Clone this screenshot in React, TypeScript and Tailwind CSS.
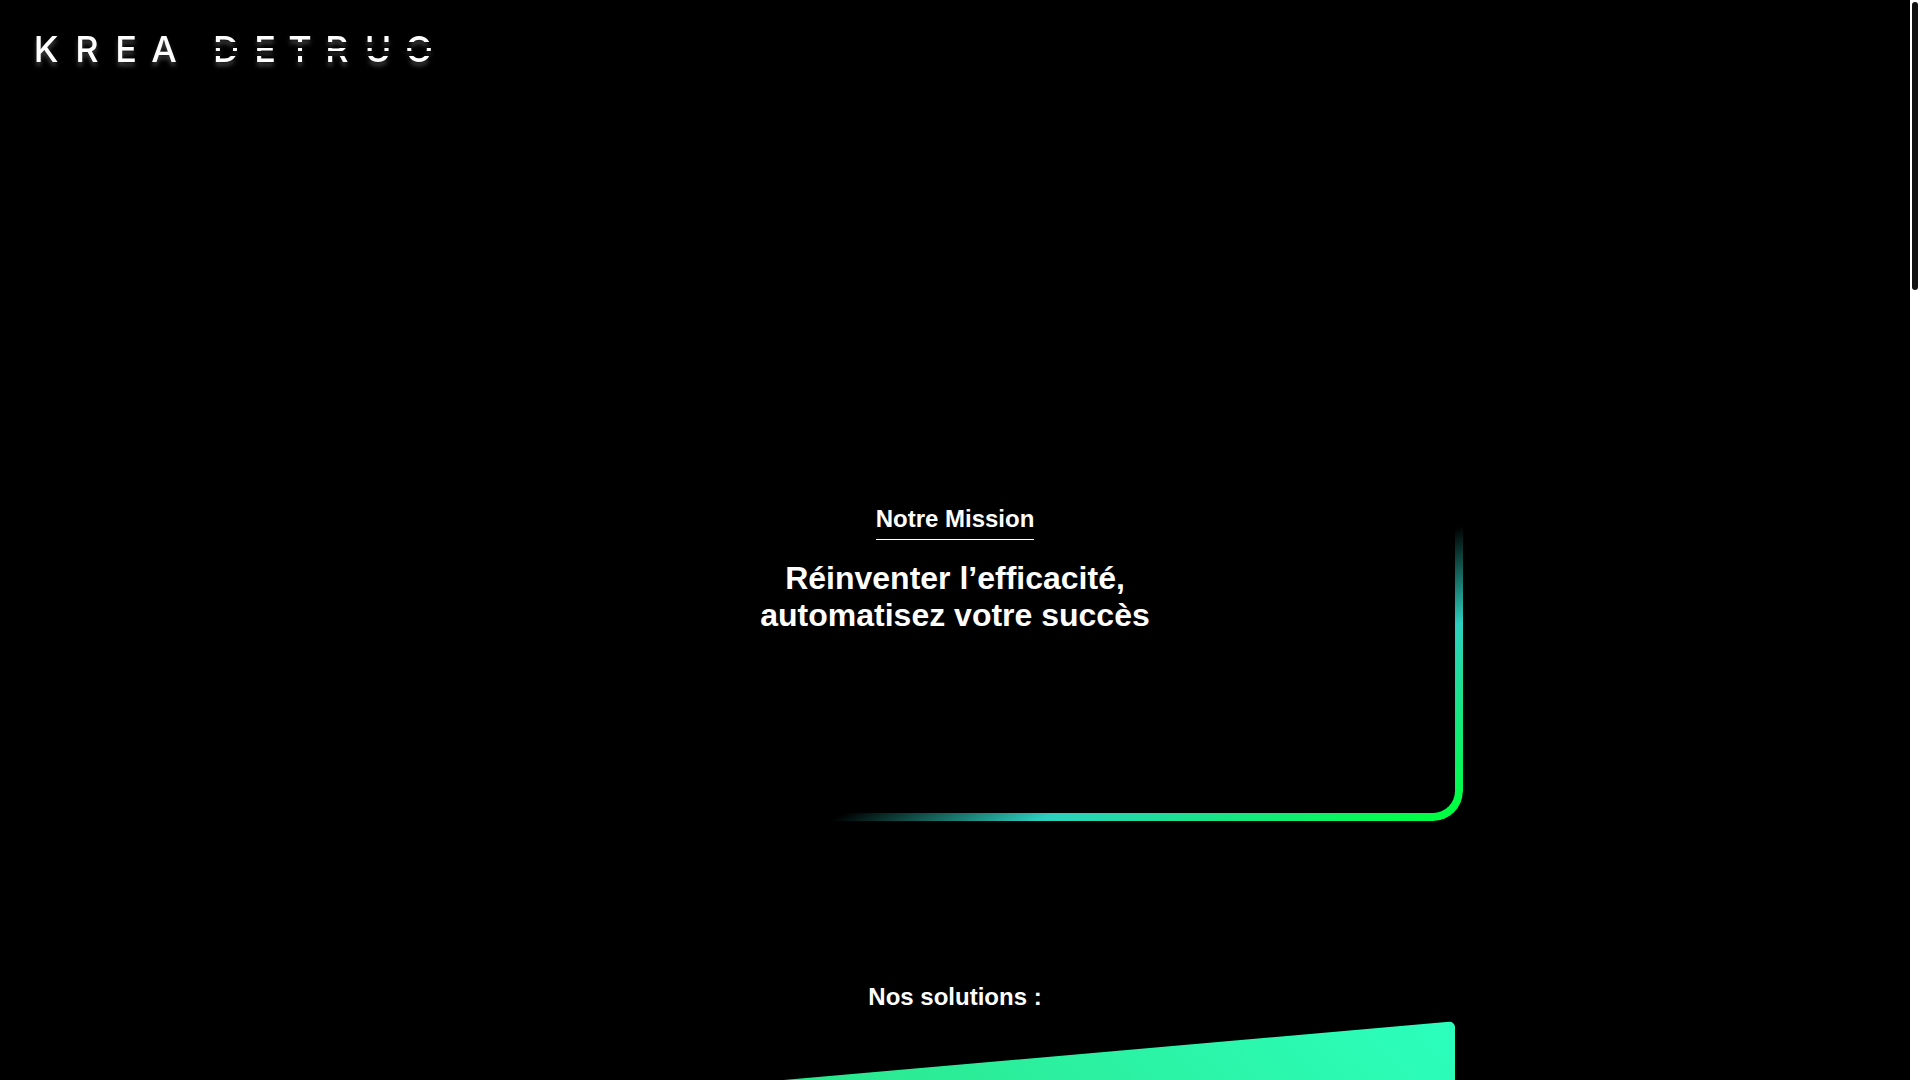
import React from "react";

function Logo() {
  return (
    <svg
      viewBox="0 0 420 48"
      role="img"
      aria-label="Krea Detruo"
      className="h-12 w-[420px] overflow-visible fill-white font-['Inter',sans-serif] text-[36px] font-medium drop-shadow-[0_4px_2px_rgba(255,255,255,0.25)]"
    >
      <defs>
        <clipPath id="stripes">
          <rect x="170" y="0" width="250" height="18" />
          <rect x="170" y="24" width="250" height="3" />
          <rect x="170" y="32" width="250" height="16" />
        </clipPath>
      </defs>
      <text x="18 59 98 136" y="38" textAnchor="middle">KREA</text>
      <text x="198 237 272 309 350 391" y="38" textAnchor="middle" clipPath="url(#stripes)">DETRUO</text>
    </svg>
  );
}

function Mission() {
  return (
    <section className="relative flex min-h-[500px] w-full flex-col items-center justify-center pb-1.5 text-center">
      <div
        aria-hidden="true"
        className="pointer-events-none absolute inset-0 rounded-[30px] bg-[linear-gradient(155deg,transparent_69.6%,#2dcfbf_79.6%,#00ff44_98%)] p-2 [mask:linear-gradient(#000_0_0)_content-box_exclude,linear-gradient(#000_0_0)]"
      />
      <h2 className="mb-5 border-b border-white pb-1 text-2xl font-bold">Notre Mission</h2>
      <p className="text-[32px] leading-[37px] font-bold">
        Réinventer l’efficacité,
        <br />
        automatisez votre succès
      </p>
    </section>
  );
}

function Solutions() {
  return (
    <section className="mt-40 flex w-full flex-col items-center px-2">
      <h2 className="text-2xl font-bold">Nos solutions :</h2>
      <div className="mt-13 h-[600px] w-full -skew-y-5 rounded-md bg-[linear-gradient(45deg,#2bc548,#2bffbd)]" />
    </section>
  );
}

export default function App() {
  return (
    <div className="flex h-screen overflow-hidden bg-black font-['Liberation_Sans',Arial,sans-serif] text-white">
      <div className="min-w-0 flex-1 overflow-hidden">
        <header className="px-7 py-6">
          <Logo />
        </header>
        <main className="mx-auto mt-[225px] flex max-w-[1016px] flex-col items-center">
          <Mission />
          <Solutions />
        </main>
      </div>
      <div aria-hidden="true" className="w-2.5 shrink-0 bg-white p-0.5">
        <div className="h-72 rounded-full bg-[#111111]" />
      </div>
    </div>
  );
}
